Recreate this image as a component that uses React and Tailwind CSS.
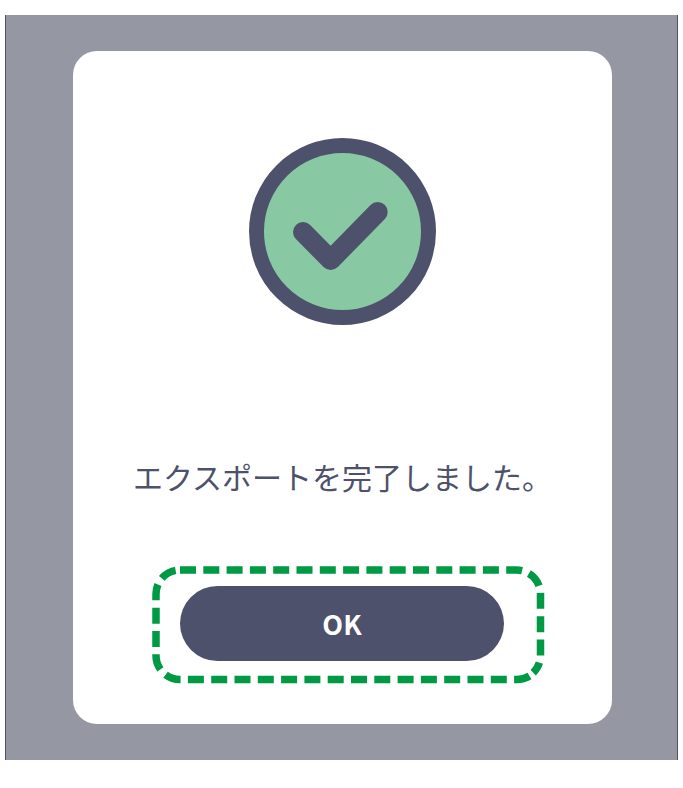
export default function App() {
  return (
    <div className="w-[683px] h-[788px] bg-white pt-[15px] pl-[5px] overflow-hidden" style={{ fontFamily: '"Noto Sans CJK JP", "Noto Sans", sans-serif' }}>
      <div className="w-[673px] h-[745px] bg-[#9597a3] border-x border-[#55505a] pt-[36px] pl-[67px]">
        <div className="w-[539px] h-[673px] bg-white rounded-[24px] flex flex-col items-center pt-[87px]">
          <svg width="187" height="187" viewBox="0 0 187 187" className="block shrink-0">
            <circle cx="93.5" cy="93.5" r="86" fill="#88c8a3" stroke="#4d516b" strokeWidth="15" />
            <path d="M54 94 L81.7 122 L128.7 74" fill="none" stroke="#4d516b" strokeWidth="20" strokeLinecap="round" strokeLinejoin="round" />
          </svg>
          <p className="mt-[131px] h-[40px] text-[30px] leading-[40px] text-[#4d516b] whitespace-nowrap font-normal">エクスポートを完了しました。</p>
          <div className="relative mt-[90px] mr-[1px] w-[324px] h-[75px]">
            <button className="w-full h-full pt-[1px] rounded-full bg-[#4d516b] text-white text-[27px] font-semibold flex items-center justify-center">OK</button>
            <svg width="393" height="118" viewBox="0 0 393 118" className="absolute left-[-28px] top-[-20px] pointer-events-none">
              <path d="M28 4 H364.5 A24 24 0 0 1 388.5 28 V89.5 A24 24 0 0 1 381.2 106.7 M377.5 110 A24 24 0 0 1 364.5 113.5 H28 A24 24 0 0 1 4 89.5 V28 A24 24 0 0 1 28 4" fill="none" stroke="#009944" strokeWidth="7.5" strokeDasharray="16 7.3" />
            </svg>
          </div>
        </div>
      </div>
    </div>
  );
}
